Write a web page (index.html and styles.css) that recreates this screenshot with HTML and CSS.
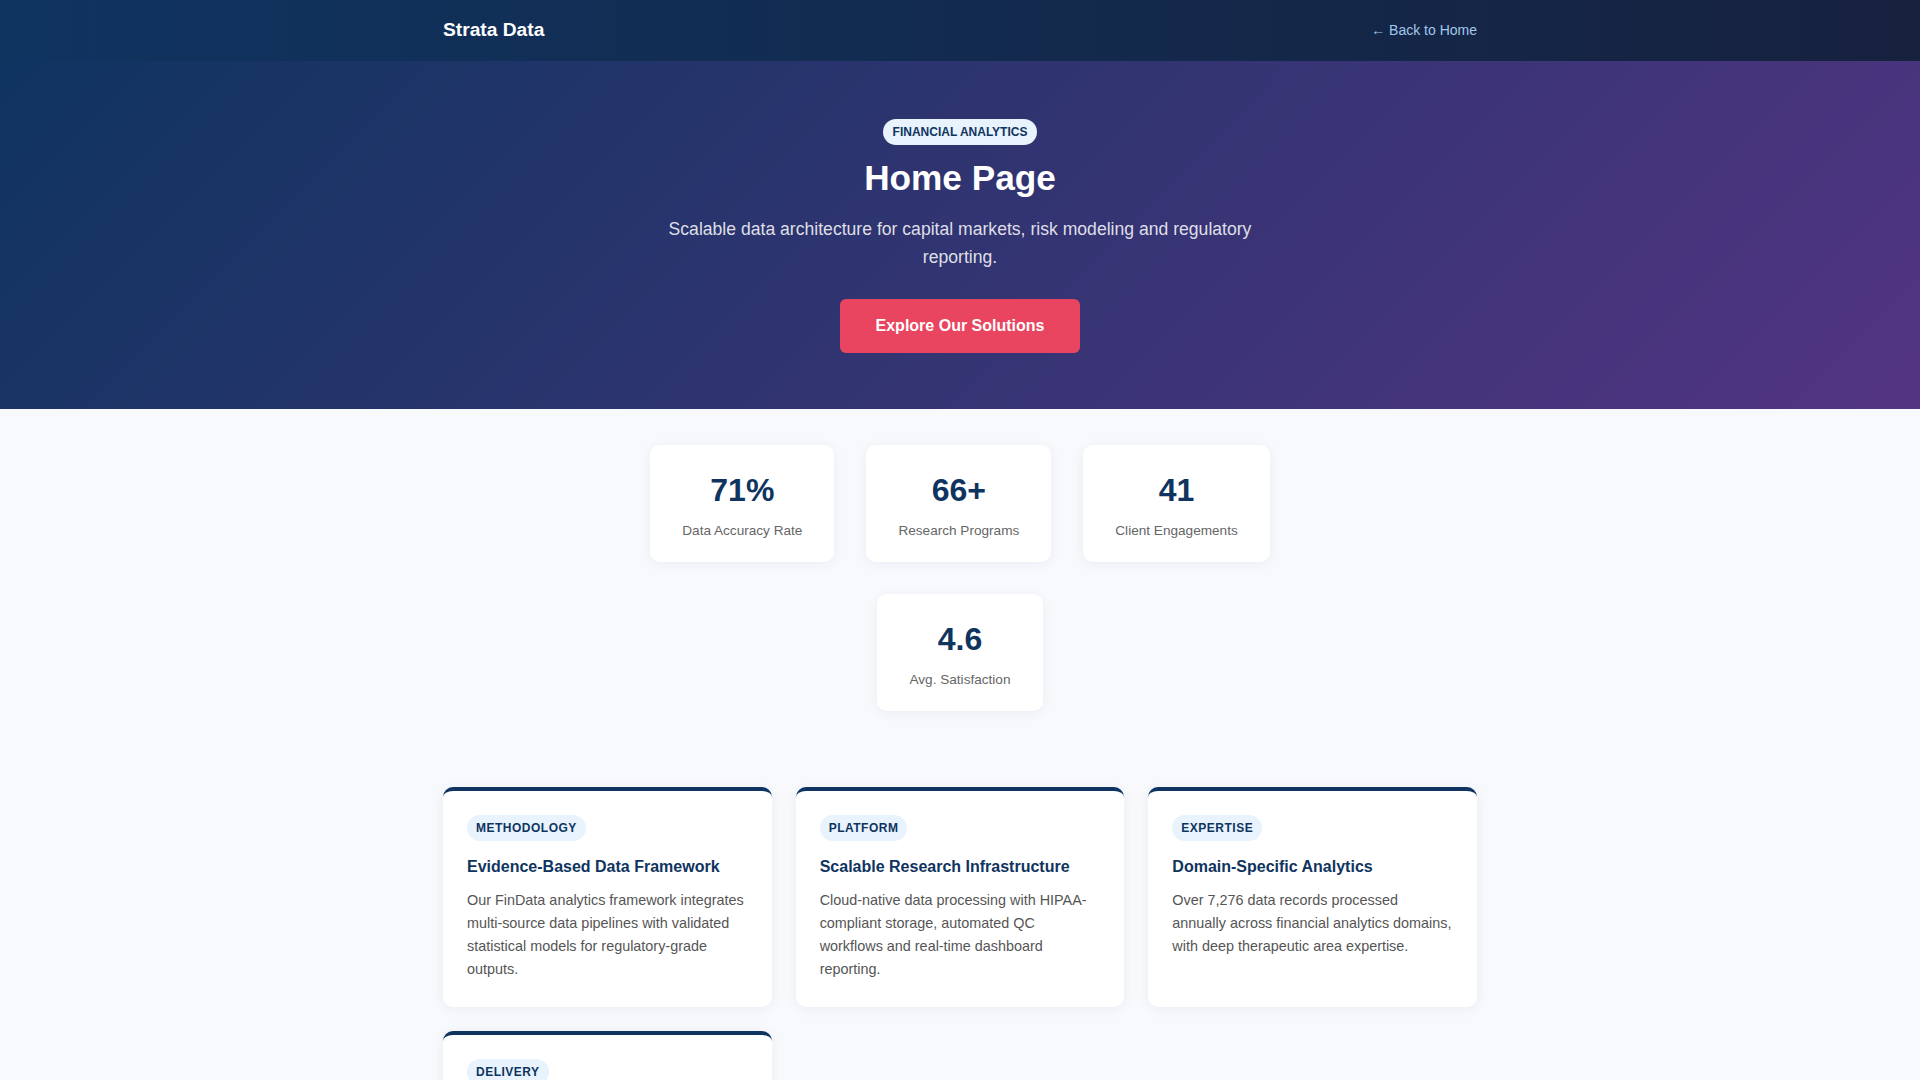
FILE: index.html
```html
<!DOCTYPE html>
<html lang="en">
<head>
<meta charset="utf-8">
<title>Strata Data — Home Page</title>
<link rel="stylesheet" href="styles.css">
</head>
<body>
<header class="nav">
  <div class="nav-inner">
    <span class="logo">Strata Data</span>
    <a class="back" href="#">← Back to Home</a>
  </div>
</header>

<section class="hero">
  <span class="hero-badge">FINANCIAL ANALYTICS</span>
  <h1 class="hero-title">Home Page</h1>
  <p class="hero-sub">Scalable data architecture for capital markets, risk modeling and regulatory reporting.</p>
  <a class="cta" href="#">Explore Our Solutions</a>
</section>

<section class="stats">
  <div class="stats-inner">
    <div class="stat"><div class="stat-num">71%</div><div class="stat-label">Data Accuracy Rate</div></div>
    <div class="stat"><div class="stat-num">66+</div><div class="stat-label">Research Programs</div></div>
    <div class="stat"><div class="stat-num">41</div><div class="stat-label">Client Engagements</div></div>
    <div class="stat"><div class="stat-num">4.6</div><div class="stat-label">Avg. Satisfaction</div></div>
  </div>
</section>

<section class="features">
  <div class="grid">
    <article class="card">
      <span class="tag">METHODOLOGY</span>
      <h3 class="card-title">Evidence-Based Data Framework</h3>
      <p class="card-text">Our FinData analytics framework integrates multi-source data pipelines with validated statistical models for regulatory-grade outputs.</p>
    </article>
    <article class="card">
      <span class="tag">PLATFORM</span>
      <h3 class="card-title">Scalable Research Infrastructure</h3>
      <p class="card-text">Cloud-native data processing with HIPAA-compliant storage, automated QC workflows and real-time dashboard reporting.</p>
    </article>
    <article class="card">
      <span class="tag">EXPERTISE</span>
      <h3 class="card-title">Domain-Specific Analytics</h3>
      <p class="card-text">Over 7,276 data records processed annually across financial analytics domains, with deep therapeutic area expertise.</p>
    </article>
    <article class="card">
      <span class="tag">DELIVERY</span>
      <h3 class="card-title">Rapid Insight Delivery</h3>
      <p class="card-text">Agile delivery teams turn raw market data into decision-ready reports with transparent timelines and audit trails.</p>
    </article>
  </div>
</section>
</body>
</html>
```

FILE: styles.css
```css
* { box-sizing: border-box; }

body {
  margin: 0;
  font-family: "Liberation Sans", Arial, sans-serif;
  background: #f7f9fc;
  color: #333;
}

.nav {
  background: linear-gradient(90deg, #0f3460 0%, #16213e 100%);
}

.nav-inner {
  max-width: 1100px;
  margin: 0 auto;
  padding: 17px 33px 19px;
  display: flex;
  justify-content: space-between;
  align-items: center;
}

.logo {
  color: #fff;
  font-weight: 700;
  font-size: 19.2px;
  line-height: 25px;
}

.back {
  color: #a3c6ea;
  font-size: 14px;
  text-decoration: none;
}

.hero {
  background: linear-gradient(135deg, #0f3460 0%, #533483 100%);
  text-align: center;
  padding: 58px 32px 56px;
  color: #fff;
}

.hero-badge {
  display: inline-block;
  background: #e8f3fd;
  color: #0f3460;
  font-size: 12px;
  font-weight: 700;
  line-height: 14px;
  padding: 6px 10px;
  border-radius: 14px;
}

.hero-title {
  margin: 12px 0 16px;
  font-size: 35.2px;
  line-height: 1.2;
  font-weight: 700;
}

.hero-sub {
  max-width: 600px;
  margin: 0 auto 27px;
  font-size: 17.6px;
  line-height: 1.6;
  color: rgba(255, 255, 255, 0.85);
}

.cta {
  display: inline-block;
  background: #e94560;
  color: #fff;
  font-size: 16px;
  font-weight: 700;
  line-height: 18px;
  padding: 18px 36px;
  border-radius: 6px;
  text-decoration: none;
}

.stats {
  padding: 36px 32px 36px;
}

.stats-inner {
  max-width: 720px;
  margin: 0 auto;
  display: flex;
  flex-wrap: wrap;
  justify-content: center;
  gap: 32px;
}

.stat {
  background: #fff;
  border-radius: 10px;
  box-shadow: 0 2px 12px rgba(15, 52, 96, 0.06);
  padding: 26px 32px 22px;
  text-align: center;
}

.stat-num {
  font-size: 32px;
  font-weight: 700;
  line-height: 1.2;
  color: #0f3460;
}

.stat-label {
  margin-top: 12px;
  font-size: 13.6px;
  line-height: 1.4;
  color: #666;
}

.features {
  padding: 40px 0 48px;
}

.grid {
  max-width: 1100px;
  margin: 0 auto;
  padding: 0 33px;
  display: grid;
  grid-template-columns: repeat(3, 1fr);
  gap: 24px;
}

.card {
  background: #fff;
  border-top: 4px solid #0f3460;
  border-radius: 10px;
  box-shadow: 0 2px 12px rgba(15, 52, 96, 0.06);
  padding: 24px 24px 26px;
}

.tag {
  display: inline-block;
  background: #e8f3fd;
  color: #0f3460;
  font-size: 12px;
  font-weight: 700;
  letter-spacing: 0.5px;
  line-height: 14px;
  padding: 6px 9px;
  border-radius: 14px;
}

.card-title {
  margin: 16px 0 11px;
  font-size: 16px;
  line-height: 1.3;
  font-weight: 700;
  color: #0f3460;
}

.card-text {
  margin: 0;
  font-size: 14.4px;
  line-height: 1.6;
  color: #555;
}
```
